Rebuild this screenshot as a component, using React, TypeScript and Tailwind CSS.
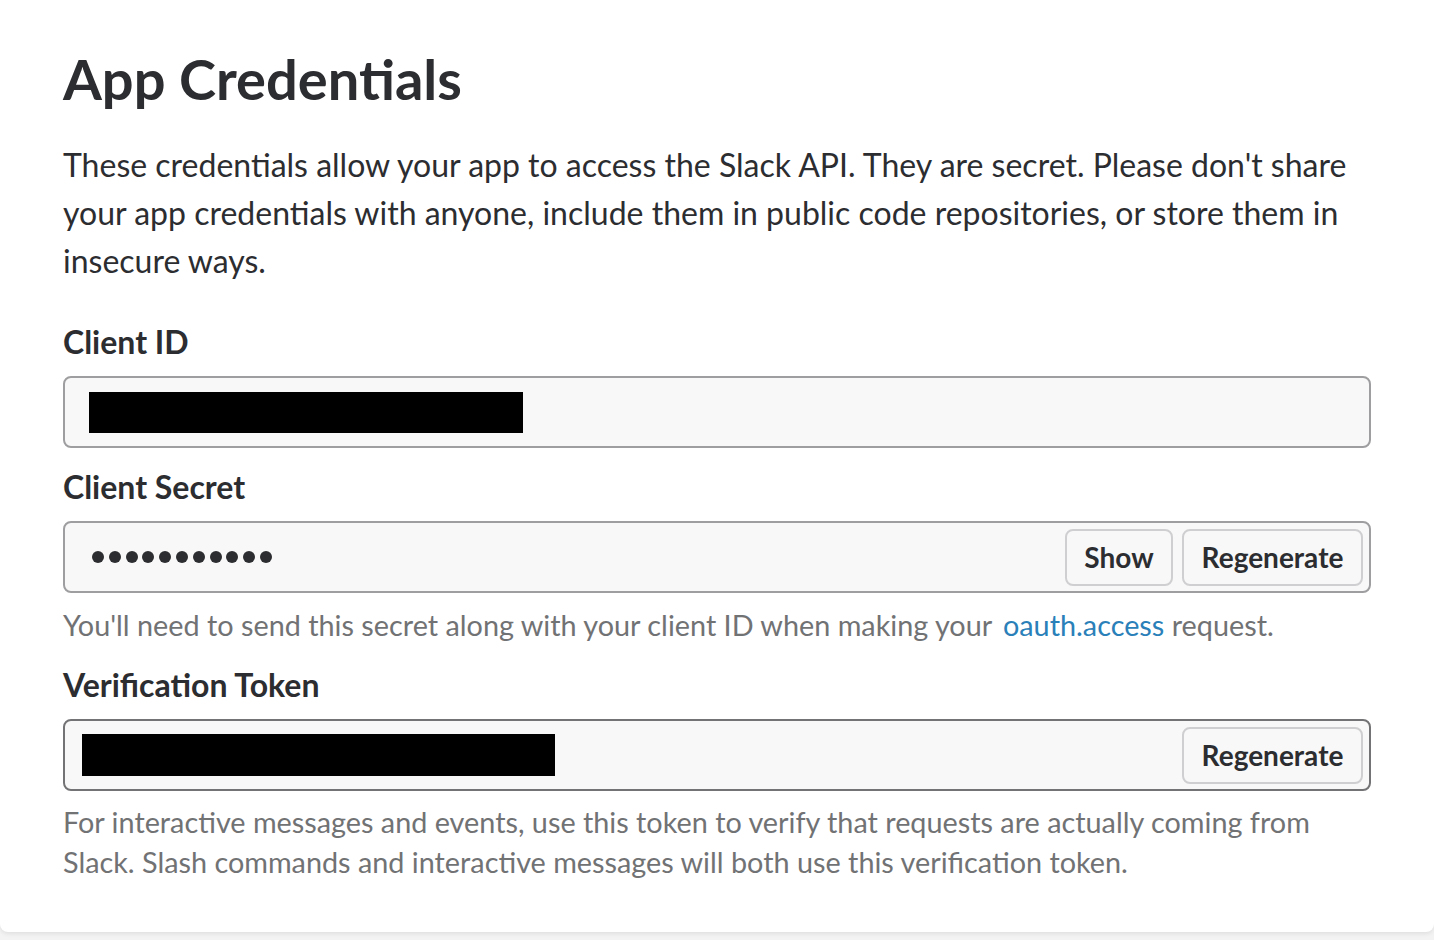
const font = { fontFamily: 'Lato, "Noto Sans", sans-serif' };

function Redacted({ className }: { className: string }) {
  return <div className={`bg-black ${className}`} />;
}

function Button({ label, className = '' }: { label: string; className?: string }) {
  return (
    <button
      className={`h-[57px] rounded-[8px] border-2 border-[#cfcfd1] bg-[#f8f8f8] text-[28px] font-bold text-[#2c2d30] ${className}`}
    >
      {label}
    </button>
  );
}

export default function App() {
  return (
    <div className="min-h-screen bg-[#f3f3f3]" style={font}>
      <div className="bg-white rounded-b-[8px] shadow-[0_2px_4px_rgba(0,0,0,0.08)] px-[63px] pt-[45px] pb-[50px] text-[#2c2d30]">
        <h1 className="text-[56px] leading-[68px] font-bold">App Credentials</h1>
        <p className="mt-[28px] text-[32px] leading-[48px]">
          These credentials allow your app to access the Slack API. They are secret. Please don't share your app
          credentials with anyone, include them in public code repositories, or store them in insecure ways.
        </p>

        {/* Client ID */}
        <h3 className="mt-[38px] text-[32px] leading-[38px] font-bold">Client ID</h3>
        <div className="mt-[15px] h-[72px] rounded-[8px] border-2 border-[#9e9ea0] bg-[#f8f8f8] flex items-center pl-[24px]">
          <Redacted className="w-[434px] h-[41px]" />
        </div>

        {/* Client Secret */}
        <h3 className="mt-[20px] text-[32px] leading-[38px] font-bold">Client Secret</h3>
        <div className="mt-[15px] h-[72px] rounded-[8px] border-2 border-[#9e9ea0] bg-[#f8f8f8] flex items-center pl-[27px] pr-[6px]">
          <div className="flex gap-[4.8px]">
            {Array.from({ length: 11 }).map((_, i) => (
              <div key={i} className="w-[12px] h-[12px] rounded-full bg-[#2c2d30]" />
            ))}
          </div>
          <div className="ml-auto flex gap-[9px]">
            <Button label="Show" className="w-[108px]" />
            <Button label="Regenerate" className="w-[181px]" />
          </div>
        </div>
        <p className="mt-[12px] text-[28.8px] leading-[40px] text-[#717274]">
          You'll need to send this secret along with your client ID when making your{' '}
          <a className="ml-[4px] text-[#2a80b9]">oauth.access</a> request.
        </p>

        {/* Verification Token */}
        <h3 className="mt-[21px] text-[32px] leading-[38px] font-bold">Verification Token</h3>
        <div className="mt-[15px] h-[72px] rounded-[8px] border-2 border-[#737375] bg-[#f8f8f8] flex items-center pl-[17px] pr-[6px]">
          <Redacted className="w-[473px] h-[42px]" />
          <Button label="Regenerate" className="ml-auto w-[181px]" />
        </div>
        <p className="mt-[11px] text-[28.8px] leading-[40px] text-[#717274]">
          For interactive messages and events, use this token to verify that requests are actually coming from Slack.
          Slash commands and interactive messages will both use this verification token.
        </p>
      </div>
    </div>
  );
}
